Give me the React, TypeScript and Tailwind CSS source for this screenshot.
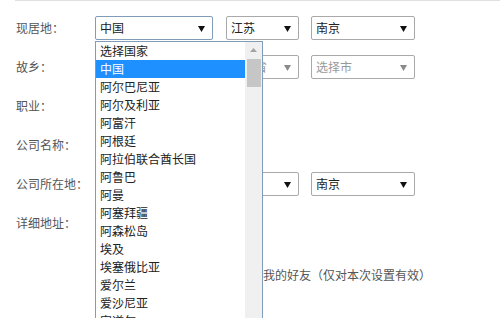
const countries = [
  '选择国家',
  '中国',
  '阿尔巴尼亚',
  '阿尔及利亚',
  '阿富汗',
  '阿根廷',
  '阿拉伯联合酋长国',
  '阿鲁巴',
  '阿曼',
  '阿塞拜疆',
  '阿森松岛',
  '埃及',
  '埃塞俄比亚',
  '爱尔兰',
  '爱沙尼亚',
  '安道尔',
];

function Arrow({ disabled }: { disabled?: boolean }) {
  return (
    <svg width="7" height="6" viewBox="0 0 7 6" className="absolute right-[7px] top-[9px]">
      <path d="M0 0h7L3.5 6z" fill={disabled ? '#8a8a8a' : '#111'} />
    </svg>
  );
}

interface SelectProps {
  value: string;
  width: string;
  disabled?: boolean;
  active?: boolean;
}

function Select({ value, width, disabled, active }: SelectProps) {
  return (
    <div
      className={`relative h-6 shrink-0 rounded-[2px] border bg-white pl-[4px] text-[12px] leading-[22px] ${width} ${
        active ? 'border-[#7f9db9]' : 'border-[#a9a9a9]'
      } ${disabled ? 'text-[#999]' : 'text-[#222]'}`}
    >
      {value}
      <Arrow disabled={disabled} />
    </div>
  );
}

function Row({ label, children }: { label: string; children?: React.ReactNode }) {
  return (
    <div className="flex h-6 items-center">
      <div className="w-[80px] shrink-0 pl-px text-[12px] text-[#555]">{label}</div>
      {children}
    </div>
  );
}

// the open country list of the first select
function Dropdown() {
  return (
    <div className="absolute left-[95px] top-[41px] flex h-[290px] w-[168px] border border-[#7f9db9] bg-white">
      <ul className="w-[149px] text-[12px] text-[#222]">
        {countries.map((c) => (
          <li
            key={c}
            className={`h-[18px] pl-[4px] leading-[18px] whitespace-nowrap ${
              c === '中国' ? 'bg-[#1e90ff] text-white' : ''
            }`}
          >
            {c}
          </li>
        ))}
      </ul>
      <div className="flex w-[17px] flex-col items-center bg-[#f0f0f0]">
        <svg width="7" height="4" viewBox="0 0 7 4" className="mt-[6px]">
          <path d="M0 4L3.5 0 7 4z" fill="#a3a3a3" />
        </svg>
        <div className="mt-[7px] h-[28px] w-[14px] bg-[#c6c6c6]" />
      </div>
    </div>
  );
}

export default function App() {
  return (
    <div
      className="relative h-[318px] w-[500px] overflow-hidden bg-white"
      style={{ fontFamily: '"Noto Sans CJK SC", "Noto Sans", sans-serif' }}
    >
      <div className="ml-[15px] border-t border-[#e0e0e0] pt-[15px]">
        <div className="flex flex-col gap-[15px]">
          <Row label="现居地：">
            <Select value="中国" width="w-[118px]" active />
            <div className="ml-[13px]">
              <Select value="江苏" width="w-[73px]" />
            </div>
            <div className="ml-[12px]">
              <Select value="南京" width="w-[104px]" />
            </div>
          </Row>
          <Row label="故乡：">
            <Select value="" width="w-[118px]" disabled />
            <div className="ml-[13px]">
              <Select value="选择省" width="w-[73px]" disabled />
            </div>
            <div className="ml-[12px]">
              <Select value="选择市" width="w-[104px]" disabled />
            </div>
          </Row>
          <Row label="职业：">
            <div className="h-6 w-[150px] border border-[#a9a9a9]" />
          </Row>
          <Row label="公司名称：">
            <div className="h-6 w-[150px] border border-[#a9a9a9]" />
          </Row>
          <Row label="公司所在地：">
            <Select value="" width="w-[118px]" />
            <div className="ml-[13px]">
              <Select value="" width="w-[73px]" />
            </div>
            <div className="ml-[12px]">
              <Select value="南京" width="w-[104px]" />
            </div>
          </Row>
          <Row label="详细地址：">
            <div className="h-6 w-[150px] border border-[#a9a9a9]" />
          </Row>
        </div>
        <div className="mt-[31px] flex h-[18px] items-center text-[12px] text-[#555]">
          <div className="w-[80px] shrink-0" />
          <input type="checkbox" className="mr-[11px] h-[13px] w-[13px]" />
          <span className="whitespace-nowrap">是否将本条资料信息同步到我的好友（仅对本次设置有效）</span>
        </div>
      </div>
      <Dropdown />
    </div>
  );
}
